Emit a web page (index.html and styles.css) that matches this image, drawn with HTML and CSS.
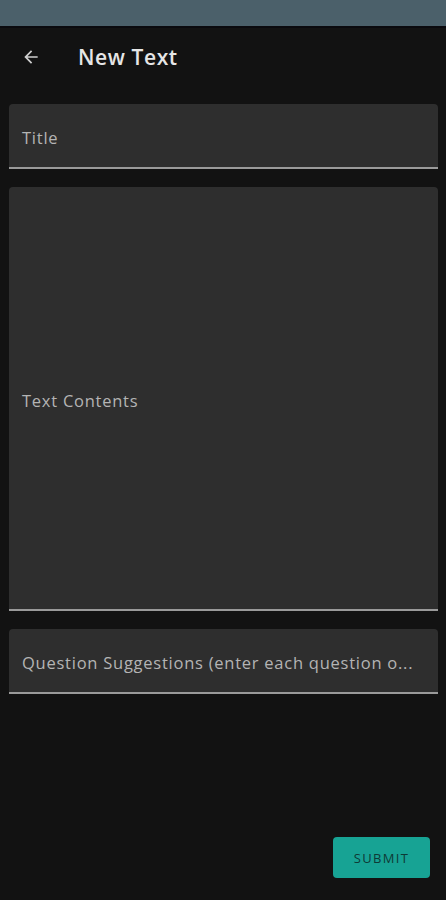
FILE: index.html
```html
<!DOCTYPE html>
<html lang="en">
<head>
  <meta charset="UTF-8">
  <meta name="viewport" content="width=device-width, initial-scale=1.0">
  <title>New Text</title>
  <link rel="stylesheet" href="styles.css">
</head>
<body>
  <div id="app">
    <div class="status-bar"></div>

    <header class="app-bar">
      <button class="back-btn" aria-label="Back">
        <svg width="20" height="20" viewBox="0 0 24 24">
          <path d="M20 11H7.83l5.59-5.59L12 4l-8 8 8 8 1.41-1.41L7.83 13H20v-2z" fill="#cfcfcf"/>
        </svg>
      </button>
      <h1>New Text</h1>
    </header>

    <!-- Form -->
    <section class="form">
      <div class="field field-title">
        <span class="label">Title</span>
      </div>
      <div class="field field-contents">
        <span class="label">Text Contents</span>
      </div>
      <div class="field field-questions">
        <span class="label">Question Suggestions (enter each question o...</span>
      </div>
    </section>

    <footer class="actions">
      <button class="submit-btn">SUBMIT</button>
    </footer>
  </div>
</body>
</html>
```

FILE: styles.css
```css
body {
  font-family: "Open Sans", "DejaVu Sans", sans-serif;
  background-color: #121212;
  margin: 0;
  padding: 0;
  color: #bdbdbd;
}

#app {
  height: 900px;
  display: flex;
  flex-direction: column;
}

.status-bar {
  height: 26px;
  background-color: #4b606a;
  border-bottom: 2px solid #0a0a0e;
}

.app-bar {
  height: 58px;
  display: flex;
  align-items: center;
  padding: 0 0 0 20px;
}

.back-btn {
  background: none;
  border: none;
  padding: 0;
  width: 22px;
  height: 22px;
  display: flex;
  align-items: center;
  justify-content: center;
}

.app-bar h1 {
  margin: 0 0 0 36px;
  font-size: 21px;
  font-weight: 600;
  color: #e6e6e6;
  letter-spacing: 0.6px;
}

.form {
  display: flex;
  flex-direction: column;
  gap: 18px;
  padding: 18px 8px 0 9px;
}

.field {
  background-color: #2e2e2e;
  border-radius: 4px 4px 0 0;
  border-bottom: 2px solid #9a9a9a;
  display: flex;
  align-items: center;
  padding: 4px 13px 0;
}

.field-title {
  height: 59px;
}

.field-contents {
  height: 418px;
}

.field-questions {
  height: 59px;
}

.label {
  font-size: 16.5px;
  letter-spacing: 0.75px;
  color: #b4b4b4;
  white-space: nowrap;
}

.actions {
  margin-top: auto;
  display: flex;
  justify-content: flex-end;
  padding: 0 16px 22px 0;
}

.submit-btn {
  background-color: #17a394;
  color: #0e3a36;
  border: none;
  border-radius: 4px;
  width: 97px;
  height: 41px;
  font-family: "Open Sans", sans-serif;
  font-size: 13px;
  letter-spacing: 1.3px;
}
```
